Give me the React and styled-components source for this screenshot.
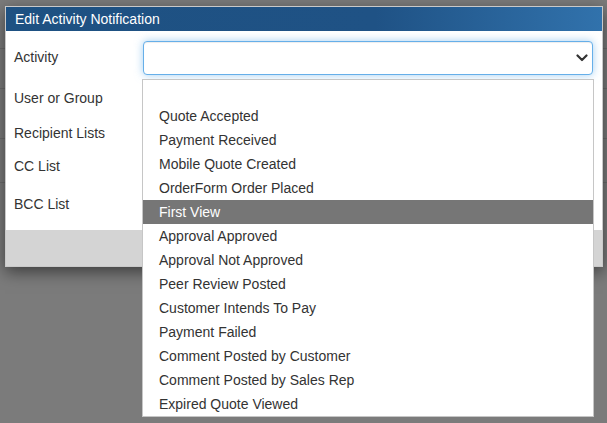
import React from "react";
import styled, { createGlobalStyle } from "styled-components";

const Global = createGlobalStyle`
  html, body { margin: 0; padding: 0; }
  body { font-family: "Liberation Sans", Arial, sans-serif; }
`;

const Backdrop = styled.div`
  position: relative;
  width: 607px;
  height: 423px;
  overflow: hidden;
  background: #7b7b7b;
`;

const BgRow = styled.div`
  height: ${(p) => p.$h}px;
  border-bottom: 1px solid #6c6c6c;
  box-sizing: border-box;
`;

const Dialog = styled.div`
  position: absolute;
  left: 5px;
  top: 6px;
  width: 598px;
  box-sizing: border-box;
  border: 1px solid #c9c9c9;
  background: #fff;
  box-shadow: 0 5px 15px rgba(0, 0, 0, 0.5);
  display: flex;
  flex-direction: column;
`;

const TitleBar = styled.div`
  height: 24px;
  display: flex;
  align-items: center;
  padding-left: 9px;
  background: linear-gradient(to right, #1e5182 0%, #1f5285 62%, #3172ac 100%);
  color: #fff;
  font-size: 14px;
`;

const Body = styled.div`
  display: flex;
  flex-direction: column;
  padding: 10px 9px 16px 0;
`;

const Row = styled.div`
  display: grid;
  grid-template-columns: 137px 1fr;
  align-items: center;
  margin-top: ${(p) => p.$top || 0}px;
  min-height: ${(p) => p.$h || 20}px;
`;

const Label = styled.div`
  padding-left: 8px;
  font-size: 14px;
  color: #333;
  line-height: 20px;
  margin-top: ${(p) => p.$shift || 0}px;
`;

const SelectBox = styled.div`
  height: 34px;
  box-sizing: border-box;
  border: 1px solid #66afe9;
  border-radius: 4px;
  box-shadow: inset 0 1px 1px rgba(0, 0, 0, 0.075), 0 0 8px rgba(102, 175, 233, 0.6);
  display: flex;
  align-items: center;
  justify-content: flex-end;
  padding-right: 4px;
  background: #fff;
`;

const Footer = styled.div`
  height: 36px;
  background: #d4d4d4;
`;

const DropList = styled.ul`
  position: absolute;
  left: 142px;
  top: 79px;
  width: 452px;
  margin: 0;
  padding: 0;
  list-style: none;
  box-sizing: border-box;
  border: 1px solid #c6c6c6;
  background: #fff;
`;

const Item = styled.li`
  height: 24px;
  line-height: 24px;
  padding-left: 16px;
  font-size: 14px;
  color: ${(p) => (p.$active ? "#fff" : "#333")};
  background: ${(p) => (p.$active ? "#767676" : "transparent")};
`;

const Chevron = () => (
  <svg width="12" height="8" viewBox="0 0 12 8">
    <path d="M1.5 1.5 L6 6 L10.5 1.5" fill="none" stroke="#333" strokeWidth="2.2" strokeLinecap="round" strokeLinejoin="round" />
  </svg>
);

const options = [
  "",
  "Quote Accepted",
  "Payment Received",
  "Mobile Quote Created",
  "OrderForm Order Placed",
  "First View",
  "Approval Approved",
  "Approval Not Approved",
  "Peer Review Posted",
  "Customer Intends To Pay",
  "Payment Failed",
  "Comment Posted by Customer",
  "Comment Posted by Sales Rep",
  "Expired Quote Viewed",
];

export default function App() {
  return (
    <>
      <Global />
      <Backdrop>
        <BgRow $h={49} />
        <BgRow $h={40} />
        <BgRow $h={50} />
        <BgRow $h={44} />
        <Dialog>
          <TitleBar>Edit Activity Notification</TitleBar>
          <Body>
            <Row $h={34}>
              <Label $shift={-2}>Activity</Label>
              <SelectBox>
                <Chevron />
              </SelectBox>
            </Row>
            <Row $top={13}>
              <Label>User or Group</Label>
              <div />
            </Row>
            <Row $top={15}>
              <Label>Recipient Lists</Label>
              <div />
            </Row>
            <Row $top={13}>
              <Label>CC List</Label>
              <div />
            </Row>
            <Row $top={18}>
              <Label>BCC List</Label>
              <div />
            </Row>
          </Body>
          <Footer />
        </Dialog>
        <DropList>
          {options.map((o, i) => (
            <Item key={i} $active={o === "First View"}>
              {o || "\u00a0"}
            </Item>
          ))}
        </DropList>
      </Backdrop>
    </>
  );
}
